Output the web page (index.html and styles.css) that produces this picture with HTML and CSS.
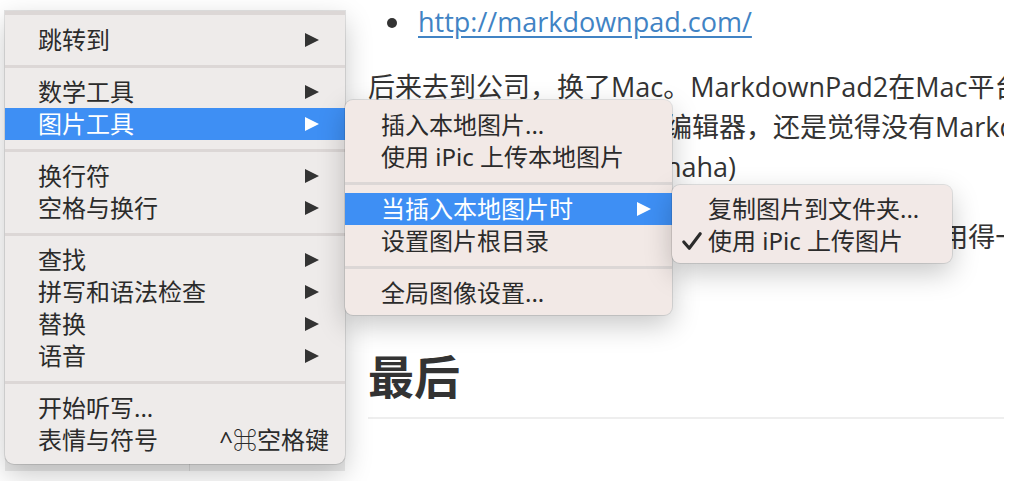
FILE: index.html
```html
<!DOCTYPE html>
<html lang="zh-CN">
<head>
<meta charset="utf-8">
<title>Typora menu</title>
<link rel="stylesheet" href="styles.css">
</head>
<body>
<div class="window">
  <aside class="sidebar">
    <div class="side-foot"><span class="side-left"></span><span class="side-right"></span></div>
  </aside>
  <main class="doc">
    <ul class="links">
      <li><a href="#">http://markdownpad.com/</a></li>
    </ul>
    <p>后来去到公司，换了Mac。MarkdownPad2在Mac平台上没有版本，<br>于是又在网上试了很多款编辑器，还是觉得没有MarkdownPad好用<br>（纠结了好久，最后还是haha)</p>
    <p>直到遇见了Typora，界面简洁，所见即所得，就用得一直很舒服。</p>
    <h2>最后</h2>
  </main>
</div>

<div class="menu main-menu">
  <div class="sep cut"></div>
  <div class="item"><span>跳转到</span><svg class="arrow" viewBox="0 0 14 14"><polygon points="0,0 14,7 0,14"/></svg></div>
  <div class="sep"></div>
  <div class="item"><span>数学工具</span><svg class="arrow" viewBox="0 0 14 14"><polygon points="0,0 14,7 0,14"/></svg></div>
  <div class="item active"><span>图片工具</span><svg class="arrow" viewBox="0 0 14 14"><polygon points="0,0 14,7 0,14"/></svg></div>
  <div class="sep"></div>
  <div class="item"><span>换行符</span><svg class="arrow" viewBox="0 0 14 14"><polygon points="0,0 14,7 0,14"/></svg></div>
  <div class="item"><span>空格与换行</span><svg class="arrow" viewBox="0 0 14 14"><polygon points="0,0 14,7 0,14"/></svg></div>
  <div class="sep"></div>
  <div class="item"><span>查找</span><svg class="arrow" viewBox="0 0 14 14"><polygon points="0,0 14,7 0,14"/></svg></div>
  <div class="item"><span>拼写和语法检查</span><svg class="arrow" viewBox="0 0 14 14"><polygon points="0,0 14,7 0,14"/></svg></div>
  <div class="item"><span>替换</span><svg class="arrow" viewBox="0 0 14 14"><polygon points="0,0 14,7 0,14"/></svg></div>
  <div class="item"><span>语音</span><svg class="arrow" viewBox="0 0 14 14"><polygon points="0,0 14,7 0,14"/></svg></div>
  <div class="sep"></div>
  <div class="item"><span>开始听写...</span></div>
  <div class="item shortcut-row"><span>表情与符号</span><span class="shortcut">^⌘空格键</span></div>
</div>

<div class="menu sub1">
  <div class="item"><span>插入本地图片...</span></div>
  <div class="item"><span>使用 iPic 上传本地图片</span></div>
  <div class="sep"></div>
  <div class="item active"><span>当插入本地图片时</span><svg class="arrow" viewBox="0 0 14 14"><polygon points="0,0 14,7 0,14"/></svg></div>
  <div class="item"><span>设置图片根目录</span></div>
  <div class="sep"></div>
  <div class="item"><span>全局图像设置...</span></div>
</div>

<div class="menu sub2">
  <div class="item"><span class="check"></span><span>复制图片到文件夹...</span></div>
  <div class="item"><span class="check"><svg viewBox="0 0 22 22"><path d="M2 12 L8 19 L20 3"/></svg></span><span>使用 iPic 上传图片</span></div>
</div>
</body>
</html>
```

FILE: styles.css
```css
* { box-sizing: border-box; }

body {
  margin: 0;
  background: #ffffff;
  font-family: "Open Sans", "Noto Sans CJK SC", sans-serif;
}

.window {
  display: flex;
  height: 471px;
}

.sidebar {
  flex: none;
  width: 345px;
  padding-left: 5px;
  display: flex;
  align-items: flex-end;
}

.side-foot {
  width: 340px;
  height: 30px;
  background: #ebebeb;
  display: flex;
}

.side-left {
  width: 185px;
  border-right: 1px solid #d6d6d6;
}

.doc {
  margin-left: 23px;
  width: 636px;
  overflow: hidden;
  color: #333333;
  font-size: 27px;
  line-height: 40px;
  white-space: nowrap;
}

.links {
  list-style: none;
  margin: 2px 0 25px;
  padding: 0;
}

.links li {
  position: relative;
  padding-left: 50px;
}

.links li::before {
  content: "";
  position: absolute;
  left: 19px;
  top: 16px;
  width: 10px;
  height: 10px;
  border-radius: 50%;
  background: #333333;
}

.links a {
  color: #4183c4;
  text-decoration: underline;
  text-underline-offset: 4px;
}

.doc p {
  margin: 0 0 30px;
}

.doc h2 {
  margin: 89px 0 0;
  font-size: 46px;
  line-height: 60px;
  font-weight: 700;
  padding-bottom: 11px;
  border-bottom: 2px solid #eeeeee;
}

/* menus */
.menu {
  position: absolute;
  font-family: "Noto Sans", "Noto Sans CJK SC", "DejaVu Sans", sans-serif;
  font-size: 24px;
  line-height: 32px;
  color: #2b2b2b;
  box-shadow: 0 10px 28px rgba(0, 0, 0, 0.22), 0 0 0 1px rgba(0, 0, 0, 0.1);
}

.main-menu {
  left: 5px;
  top: 11px;
  width: 340px;
  height: 453px;
  background: #eeebea;
  border-radius: 0 0 9px 9px;
}

.sub1 {
  left: 345px;
  top: 100px;
  width: 327px;
  height: 215px;
  padding-top: 9px;
  background: #f2e9e6;
  border-radius: 8px;
}

.sub2 {
  left: 672px;
  top: 185px;
  width: 280px;
  height: 78px;
  padding-top: 8px;
  background: #f2e9e7;
  border-radius: 8px;
}

.item {
  height: 32px;
  display: flex;
  align-items: center;
  justify-content: space-between;
  padding: 0 26px 0 33px;
  white-space: nowrap;
}

.sub1 .item {
  padding: 0 21px 0 36px;
}

.sub2 .item {
  justify-content: flex-start;
  padding: 0 10px;
}

.item.active {
  background: #3e8ff4;
  color: #ffffff;
}

.arrow {
  width: 14px;
  height: 14px;
  fill: #333333;
}

.item.active .arrow {
  fill: #ffffff;
}

.shortcut-row {
  padding-right: 16px;
}

.check {
  width: 26px;
  height: 22px;
  display: flex;
  align-items: center;
}

.check svg {
  width: 20px;
  height: 20px;
  fill: none;
  stroke: #2b2b2b;
  stroke-width: 3.4;
  stroke-linecap: round;
  stroke-linejoin: round;
}

.sep {
  height: 20px;
  display: flex;
  align-items: center;
}

.sep::before {
  content: "";
  flex: 1;
  height: 3px;
  background: #dcd7d6;
}

.sep.cut {
  height: 13px;
  align-items: flex-start;
}

.sep.cut::before {
  height: 4px;
}
```
